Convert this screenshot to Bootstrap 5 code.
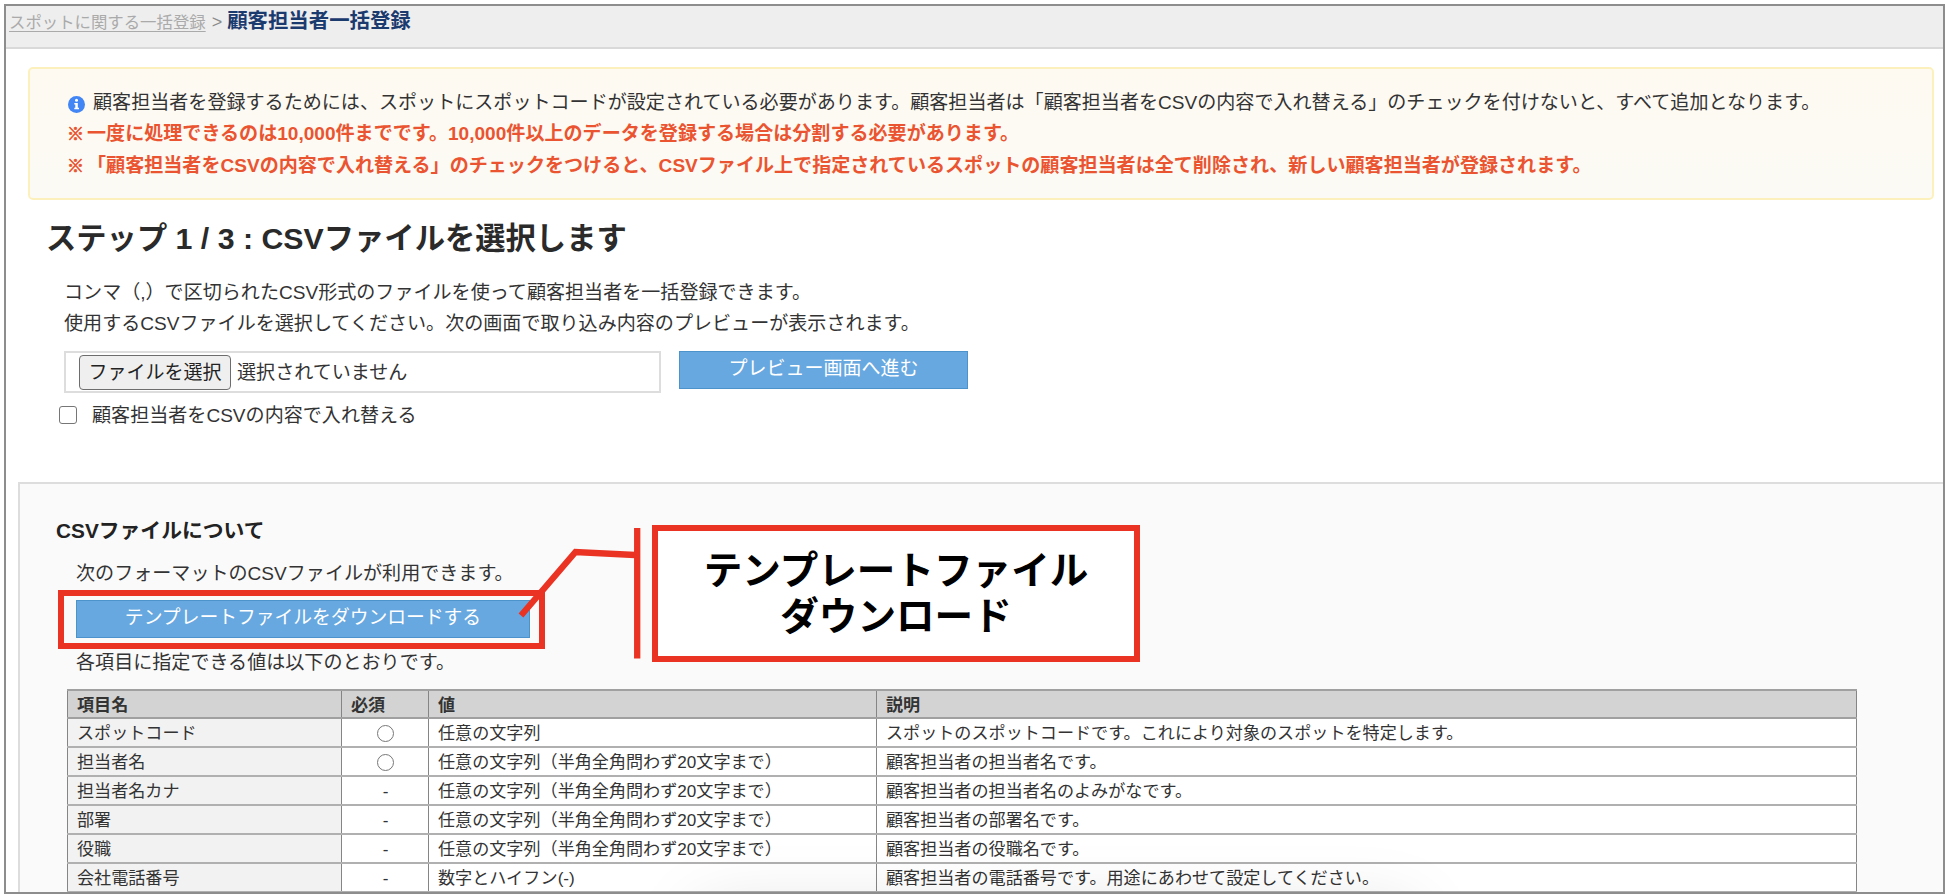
<!DOCTYPE html>
<html lang="ja">
<head>
<meta charset="utf-8">
<meta name="viewport" content="width=device-width, initial-scale=1">
<title>顧客担当者一括登録</title>
<link href="https://cdn.jsdelivr.net/npm/bootstrap@5.3.0/dist/css/bootstrap.min.css" rel="stylesheet">
<style>
body{font-family:"Liberation Sans","Noto Sans CJK JP",sans-serif;font-size:19.07px;line-height:31px;color:#333;background:#fff;height:894px;overflow:hidden;padding:4px 1px 0 4px}
.app-frame{height:890px;border:2px solid #8d8d8d}
.crumb-bar{height:43px;background:#eee;border-bottom:2px solid #d9d9d9;padding-left:3px;font-size:16.4px;color:#8b8b8b;line-height:32px}
.crumb-bar a{color:#aaa;text-underline-offset:3px}
.crumb-bar .sep{margin:0 5px 0 6px;font-size:18px}
.crumb-bar h1{font-size:20.4px;line-height:30px;color:#1b3a6e}
.notice{margin:18px 9px 0 22px;height:133px;border:2px solid #fcf1bd;border-radius:5px;background:linear-gradient(#fefaf2,#fbfaf4);padding:18px 0 0 37px}
.notice svg{width:17px;height:17px;margin:3px 8px 0 1px}
.notice .warn{color:#ea5430;font-weight:bold}
.notice .kome{font-size:17px;width:20px;padding-top:1px;-webkit-text-stroke:.7px #ea5430}
.step{height:282px;padding:19px 0 0 40px}
.step h2{font-size:30.3px;line-height:40px;color:#2a2a2a}
.step-body{padding:18px 0 0 18px}
.picker{padding-top:12px;gap:18px}
.file-box{width:597px;height:42px;border:2px solid #ddd;padding-left:13px}
.file-pick{height:35px;width:152px;border:1px solid #6d6d6d;border-radius:4px;background:#efefef;color:#222;line-height:31px;padding:0;font-size:19px;margin-right:6px}
.act{background:#68a8e0;border:1px solid #4c92cb;border-radius:0;color:#fff;font-size:19px;line-height:33px;padding:0 0 3px;height:38px}
.act:hover{background:#5b9cd6;color:#fff}
.act-next{width:289px}
.act-dl{width:454px;margin:11px 0 9px;font-size:18.8px}
.replace{padding:7px 0 0 13px;gap:15px}
.tick{width:18px;height:18px;border:1px solid #767676;border-radius:3px!important;margin:0 0 2px}
.about{margin:0 0 0 12px;height:420px;background:#fafafa;border-top:2px solid #ddd;border-left:2px solid #ddd;padding:32px 0 0 36px}
.about h3{font-size:20.8px;line-height:30px;color:#222}
.about-body{padding:12px 0 0 20px}
.spec{width:1790px;margin:11px 0 0 11px;table-layout:fixed;font-size:17.1px;line-height:20px;border-collapse:collapse;color:#333}
.spec tr{height:29px}.spec thead tr{height:28px}
.spec th,.spec td{border:solid #b0b0b0;border-width:2px 1px;border-left-color:#858585;border-right-color:#858585;padding:4px 8px 1px 9px;white-space:nowrap;background:#fff;vertical-align:middle}
.spec thead th{background:#d3d3d3;border-bottom-color:#a0a0a0;border-top-color:#a0a0a0}
.spec tbody th{background:#f2f2f2;font-weight:normal}
.c-name{width:274px}.c-req{width:87px}.c-val{width:448px}
.ring{width:17px;height:17px;border:1px solid #777;position:relative;top:-1px}
.glow{left:700px;top:912px;width:700px;height:60px;box-shadow:0 0 70px 8px rgba(0,0,0,.13)}
.marker{left:58px;top:590px;width:487px;height:59px;border:6px solid #ea3323}
.callout{left:652px;top:525px;width:488px;height:137px;border:6px solid #ea3323;background:#fff;color:#000;font-size:38.6px;font-weight:bold;line-height:46px;padding-top:17px}
.leader{left:510px;top:520px}
</style>
</head>
<body class="position-relative">
<div class="app-frame overflow-hidden position-relative">
  <nav class="crumb-bar d-flex text-nowrap">
    <a href="#">スポットに関する一括登録</a><span class="sep">&gt;</span><h1 class="fw-bold m-0">顧客担当者一括登録</h1>
  </nav>
  <section class="notice text-nowrap">
    <div class="d-flex align-items-center"><svg viewBox="0 0 17 17"><circle cx="8.5" cy="8.5" r="8.5" fill="#4285f4"/><circle cx="8.5" cy="4.2" r="1.5" fill="#fff"/><path d="M6.3 7h3.5v4.7H11v1.6H6.3v-1.6h1V8.500h-1z" fill="#fff"/></svg><span>顧客担当者を登録するためには、スポットにスポットコードが設定されている必要があります。顧客担当者は「顧客担当者をCSVの内容で入れ替える」のチェックを付けないと、すべて追加となります。</span></div>
    <div class="warn d-flex"><span class="kome">※</span><span>一度に処理できるのは10,000件までです。10,000件以上のデータを登録する場合は分割する必要があります。</span></div>
    <div class="warn d-flex"><span class="kome">※</span><span>「顧客担当者をCSVの内容で入れ替える」のチェックをつけると、CSVファイル上で指定されているスポットの顧客担当者は全て削除され、新しい顧客担当者が登録されます。</span></div>
  </section>
  <section class="step text-nowrap">
    <h2 class="fw-bold m-0">ステップ 1 / 3 : CSVファイルを選択します</h2>
    <div class="step-body">
      <p class="m-0">コンマ（,）で区切られたCSV形式のファイルを使って顧客担当者を一括登録できます。</p>
      <p class="m-0">使用するCSVファイルを選択してください。次の画面で取り込み内容のプレビューが表示されます。</p>
      <div class="picker d-flex align-items-start">
        <div class="file-box d-flex align-items-center"><button class="file-pick" type="button">ファイルを選択</button><span>選択されていません</span></div>
        <button class="btn act act-next" type="button">プレビュー画面へ進む</button>
      </div>
    </div>
    <label class="replace d-flex align-items-center"><input class="form-check-input tick" type="checkbox"><span>顧客担当者をCSVの内容で入れ替える</span></label>
  </section>
  <section class="about text-nowrap">
    <h3 class="fw-bold m-0">CSVファイルについて</h3>
    <div class="about-body">
      <p class="m-0">次のフォーマットのCSVファイルが利用できます。</p>
      <button class="btn act act-dl d-block" type="button">テンプレートファイルをダウンロードする</button>
      <p class="m-0">各項目に指定できる値は以下のとおりです。</p>
    </div>
    <table class="spec">
      <colgroup><col class="c-name"><col class="c-req"><col class="c-val"><col></colgroup>
      <thead><tr><th>項目名</th><th>必須</th><th>値</th><th>説明</th></tr></thead>
      <tbody>
        <tr><th>スポットコード</th><td><div class="ring rounded-circle mx-auto"></div></td><td>任意の文字列</td><td>スポットのスポットコードです。これにより対象のスポットを特定します。</td></tr>
        <tr><th>担当者名</th><td><div class="ring rounded-circle mx-auto"></div></td><td>任意の文字列（半角全角問わず20文字まで）</td><td>顧客担当者の担当者名です。</td></tr>
        <tr><th>担当者名カナ</th><td class="text-center">-</td><td>任意の文字列（半角全角問わず20文字まで）</td><td>顧客担当者の担当者名のよみがなです。</td></tr>
        <tr><th>部署</th><td class="text-center">-</td><td>任意の文字列（半角全角問わず20文字まで）</td><td>顧客担当者の部署名です。</td></tr>
        <tr><th>役職</th><td class="text-center">-</td><td>任意の文字列（半角全角問わず20文字まで）</td><td>顧客担当者の役職名です。</td></tr>
        <tr><th>会社電話番号</th><td class="text-center">-</td><td>数字とハイフン(-)</td><td>顧客担当者の電話番号です。用途にあわせて設定してください。</td></tr>
      </tbody>
    </table>
  </section>
  <div class="glow position-absolute"></div>
</div>
<div class="marker position-absolute"></div>
<svg class="leader position-absolute" width="140" height="145"><path d="M11 95.500L65.500 32L125 35M127.200 8v130.500" fill="none" stroke="#ea3323" stroke-width="6.300"/></svg>
<div class="callout position-absolute text-center text-nowrap">テンプレートファイル<br>ダウンロード</div>
<script src="https://cdn.jsdelivr.net/npm/bootstrap@5.3.0/dist/js/bootstrap.bundle.min.js"></script>
</body>
</html>
